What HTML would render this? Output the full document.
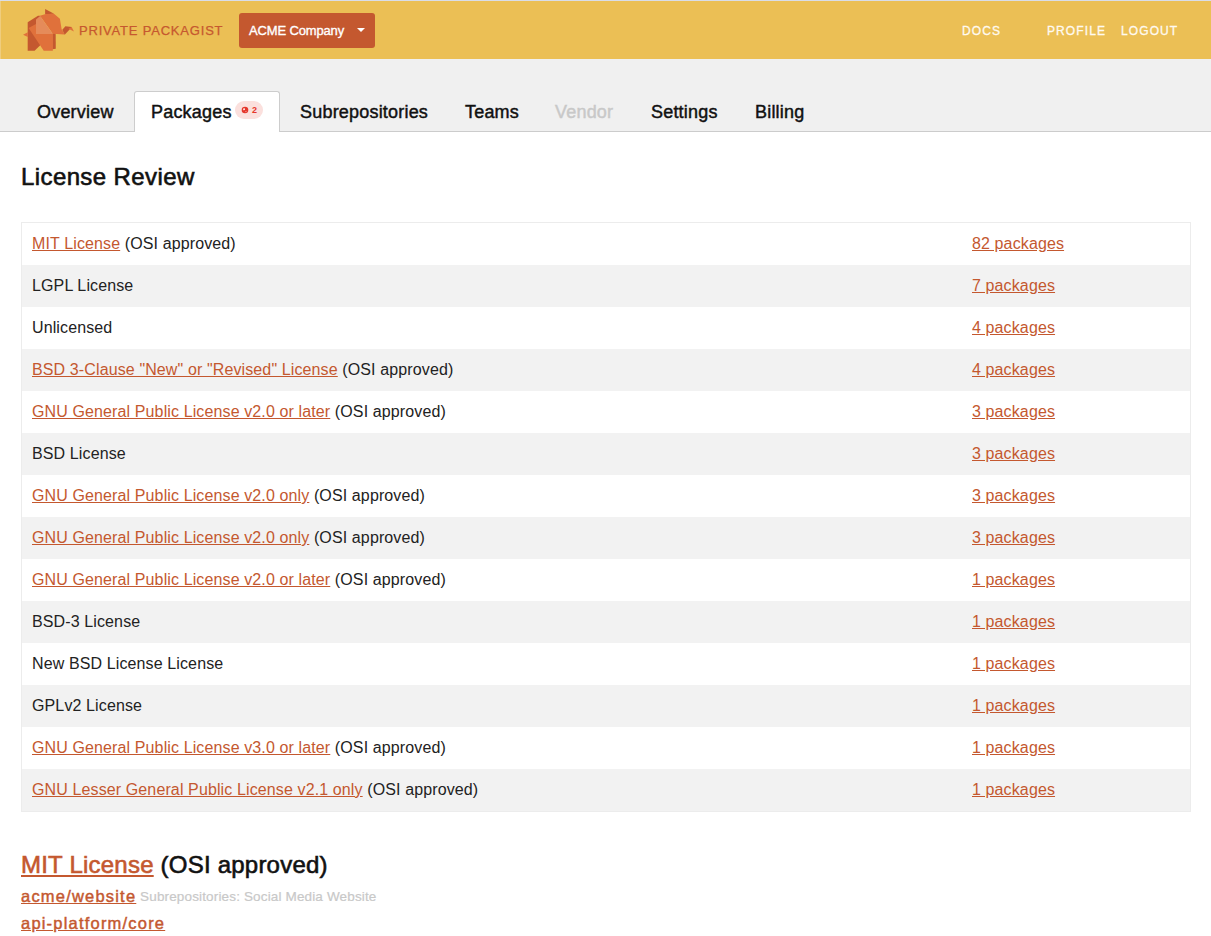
<!DOCTYPE html>
<html><head><meta charset="utf-8">
<style>
*{box-sizing:border-box;margin:0;padding:0}
html,body{width:1211px;height:936px;overflow:hidden;background:#fff;font-family:"Liberation Sans",sans-serif;color:#222}
.hdr{position:absolute;left:0;top:0;width:1211px;height:59px;background:#ebbf55;border-top:1px solid #d9dde8}
.logo{position:absolute;left:20px;top:5px;width:56px;height:48px}
.brand{position:absolute;left:79px;top:22px;-webkit-text-stroke:0.25px #c6582f;font-size:13px;letter-spacing:0.8px;color:#c6582f;white-space:nowrap}
.btn{position:absolute;left:239px;top:12px;width:136px;height:35px;background:#c4582f;border-radius:3px;color:#fff;font-size:13px;letter-spacing:-0.15px;-webkit-text-stroke:0.35px #fff}
.btn span{position:absolute;left:10px;top:9.5px;white-space:nowrap}
.caret{position:absolute;left:357px;top:27px;width:0;height:0;border-left:4px solid transparent;border-right:4px solid transparent;border-top:4px solid #fff}
.nav{position:absolute;top:23px;font-size:12px;letter-spacing:1.1px;color:#fffaf0;-webkit-text-stroke:0.3px #fffaf0;white-space:nowrap}
.bar{position:absolute;left:0;top:59px;width:1211px;height:73px;background:#f0f0f0;border-bottom:1px solid #ccc}
.tab{position:absolute;top:102px;font-size:18px;letter-spacing:0.2px;-webkit-text-stroke:0.45px currentColor;color:#111;white-space:nowrap}
.tabact{position:absolute;left:134px;top:91px;width:146px;height:41px;background:#fff;border:1px solid #cdcdcd;border-bottom:none;border-radius:3px 3px 0 0}
.badge{position:absolute;left:235px;top:101px;width:28px;height:18px;border-radius:9px;background:#fbe0dd}
.badge svg{position:absolute;left:6px;top:5px}
.badge b{position:absolute;left:17px;top:3.5px;font-size:9px;font-weight:bold;color:#e5362b}
h1{position:absolute;left:21px;top:163px;font-size:24px;font-weight:normal;letter-spacing:0.4px;-webkit-text-stroke:0.6px #111;color:#111;white-space:nowrap}
table{position:absolute;left:21px;top:222px;width:1170px;border-collapse:separate;border-spacing:0;border:1px solid #ececec}
td{height:42px;font-size:16px;padding:0 0 0 10px;vertical-align:middle;white-space:nowrap;color:#222;letter-spacing:0.12px}
td.c2{width:228px;padding-left:10px}
tr:nth-child(even) td{background:#f2f2f2}
a{color:#c4582f;text-decoration:underline}
.sec{position:absolute;left:21px;top:851px;font-size:24px;letter-spacing:0.22px;-webkit-text-stroke:0.6px currentColor;color:#111;white-space:nowrap}
.pk{position:absolute;left:21px;font-size:16.5px;letter-spacing:1.2px;-webkit-text-stroke:0.45px currentColor;white-space:nowrap}
.sub{position:relative;top:-1px;margin-left:-2px;font-size:13.5px;font-weight:normal;letter-spacing:0.15px;-webkit-text-stroke:0.2px currentColor;color:#c8c8c8}
</style></head><body>
<div class="hdr">
  <svg class="logo" viewBox="0 0 1092 936" width="56" height="48">
<polygon fill="#c4582f" points="490,60 665,152 490,162"/>
<polygon fill="#c4582f" points="150,318 350,192 400,190 390,770 285,872 150,872"/>
<polygon fill="#c4582f" points="630,530 695,530 698,835 630,845"/>
<polygon fill="#e0713b" points="390,188 500,158 662,150 778,248 812,455 872,558 640,540"/>
<polygon fill="#e0713b" points="168,430 312,350 312,545 640,545 640,872 462,872"/>
<polygon fill="#e58b5a" points="312,262 392,195 640,545 312,545"/>
<polygon fill="#c4582f" points="825,462 885,395 1012,410 872,560"/>
<polygon fill="#e0713b" points="945,445 1008,408 1052,495"/>
<polygon fill="#e0713b" points="60,560 152,510 152,605"/>
</svg>
  <div class="brand">PRIVATE PACKAGIST</div>
  <div class="btn"><span>ACME Company</span></div>
  <div class="caret"></div>
  <div class="nav" style="left:962px">DOCS</div>
  <div class="nav" style="left:1047px">PROFILE</div>
  <div class="nav" style="left:1121px">LOGOUT</div>
</div>
<div class="bar"></div>
<div style="position:absolute;left:0;top:1px;width:1px;height:58px;background:#efcd7e"></div>
<div class="tabact"></div>
<div class="tab" style="left:37px">Overview</div>
<div class="tab" style="left:151px">Packages</div>
<div class="badge"><svg width="8" height="8" viewBox="0 0 8 8"><circle cx="4" cy="4" r="3.3" fill="#e5362b"/><path d="M2.2 2.6 L3.8 2.2 L3.9 4 L2.3 4.2Z" fill="#fff"/><path d="M4.6 5 L5.6 5.2 L4.7 6.2Z" fill="#fff"/></svg><b>2</b></div>
<div class="tab" style="left:300px">Subrepositories</div>
<div class="tab" style="left:465px">Teams</div>
<div class="tab" style="left:555px;color:#c8c8c8">Vendor</div>
<div class="tab" style="left:651px">Settings</div>
<div class="tab" style="left:755px">Billing</div>
<h1>License Review</h1>
<table>
<tr><td><a>MIT License</a> (OSI approved)</td><td class="c2"><a>82 packages</a></td></tr>
<tr><td>LGPL License</td><td class="c2"><a>7 packages</a></td></tr>
<tr><td>Unlicensed</td><td class="c2"><a>4 packages</a></td></tr>
<tr><td><a>BSD 3-Clause "New" or "Revised" License</a> (OSI approved)</td><td class="c2"><a>4 packages</a></td></tr>
<tr><td><a>GNU General Public License v2.0 or later</a> (OSI approved)</td><td class="c2"><a>3 packages</a></td></tr>
<tr><td>BSD License</td><td class="c2"><a>3 packages</a></td></tr>
<tr><td><a>GNU General Public License v2.0 only</a> (OSI approved)</td><td class="c2"><a>3 packages</a></td></tr>
<tr><td><a>GNU General Public License v2.0 only</a> (OSI approved)</td><td class="c2"><a>3 packages</a></td></tr>
<tr><td><a>GNU General Public License v2.0 or later</a> (OSI approved)</td><td class="c2"><a>1 packages</a></td></tr>
<tr><td>BSD-3 License</td><td class="c2"><a>1 packages</a></td></tr>
<tr><td>New BSD License License</td><td class="c2"><a>1 packages</a></td></tr>
<tr><td>GPLv2 License</td><td class="c2"><a>1 packages</a></td></tr>
<tr><td><a>GNU General Public License v3.0 or later</a> (OSI approved)</td><td class="c2"><a>1 packages</a></td></tr>
<tr><td><a>GNU Lesser General Public License v2.1 only</a> (OSI approved)</td><td class="c2"><a>1 packages</a></td></tr>
</table>
<div class="sec"><a>MIT License</a> (OSI approved)</div>
<div class="pk" style="top:887px"><a>acme/website</a> <span class="sub">Subrepositories: Social Media Website</span></div>
<div class="pk" style="top:914px"><a>api-platform/core</a></div>
</body></html>
